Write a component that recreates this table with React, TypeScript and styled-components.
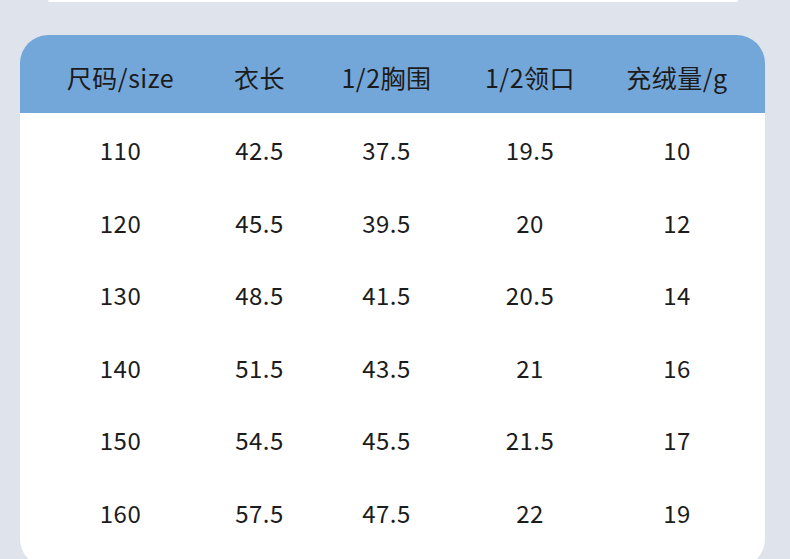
import React from "react";
import styled, { createGlobalStyle } from "styled-components";

const GlobalStyle = createGlobalStyle`
  html, body {
    margin: 0;
    padding: 0;
    background: #dfe4ec;
    overflow: hidden;
  }
  body {
    font-family: "Noto Sans", "Noto Sans CJK SC", sans-serif;
    color: #222;
  }
`;

const Page = styled.div`
  width: 790px;
  height: 559px;
  overflow: hidden;
`;

// bottom edge of the card above, just peeking in
const PrevCard = styled.div`
  height: 2px;
  margin: 0 52px 0 48px;
  background: #fff;
  border-radius: 0 0 2px 2px;
`;

const Card = styled.div`
  margin: 33px 25px 0 20px;
  height: 532px;
  background: #fff;
  border-radius: 28px;
  overflow: hidden;
`;

const Row = styled.div<{ $head?: boolean }>`
  display: grid;
  grid-template-columns: 201px 77px 177px 110px 184px;
  align-items: center;
  height: ${(p) => (p.$head ? "78px" : "72.5px")};
  box-sizing: border-box;
  padding-top: ${(p) => (p.$head ? "6px" : "0")};
  background: ${(p) => (p.$head ? "#74a7d9" : "transparent")};
`;

const Body = styled.div`
  padding-top: 1px;
`;

const Cell = styled.div<{ $head?: boolean }>`
  text-align: center;
  font-family: "Noto Sans CJK SC", "Noto Sans", sans-serif;
  font-size: ${(p) => (p.$head ? "25px" : "24px")};
  font-weight: 400;
  line-height: 1;
  letter-spacing: 0.5px;
  color: #1c1c1c;
`;

const headers = ["尺码/size", "衣长", "1/2胸围", "1/2领口", "充绒量/g"];

const rows = [
  ["110", "42.5", "37.5", "19.5", "10"],
  ["120", "45.5", "39.5", "20", "12"],
  ["130", "48.5", "41.5", "20.5", "14"],
  ["140", "51.5", "43.5", "21", "16"],
  ["150", "54.5", "45.5", "21.5", "17"],
  ["160", "57.5", "47.5", "22", "19"],
];

export default function App() {
  return (
    <Page>
      <GlobalStyle />
      <PrevCard />
      <Card>
        <Row $head>
          {headers.map((h) => (
            <Cell $head key={h}>
              {h}
            </Cell>
          ))}
        </Row>
        <Body>
          {rows.map((r) => (
            <Row key={r[0]}>
              {r.map((v, i) => (
                <Cell key={i}>{v}</Cell>
              ))}
            </Row>
          ))}
        </Body>
      </Card>
    </Page>
  );
}
